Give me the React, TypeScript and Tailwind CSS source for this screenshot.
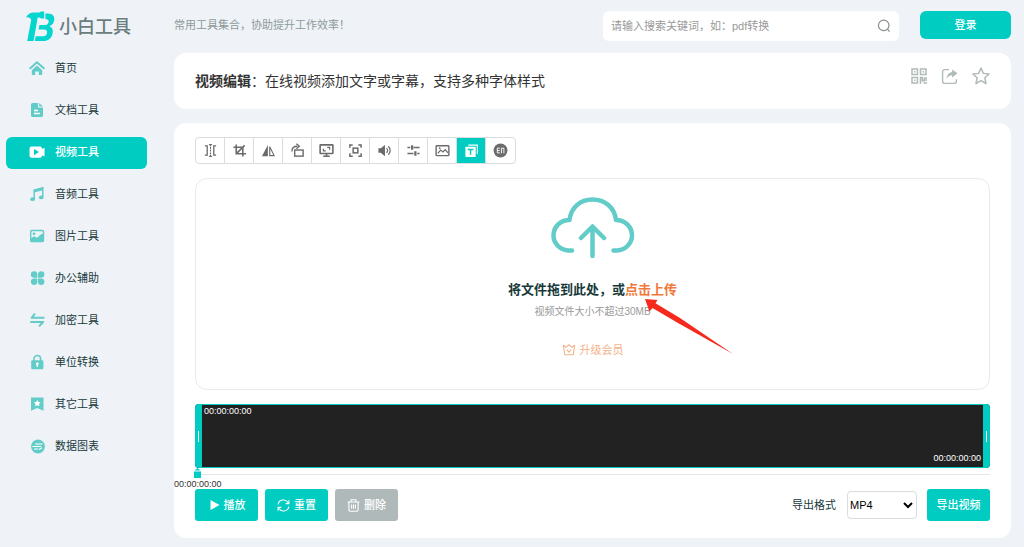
import React from 'react';

const Icon = ({ size = 16, box = 24, className = '', children }: {
  size?: number;
  box?: number;
  className?: string;
  children: React.ReactNode;
}) => (
  <svg
    width={size}
    height={size}
    viewBox={`0 0 ${box} ${box}`}
    className={`shrink-0 ${className}`}
    fill="none"
    stroke="currentColor"
    strokeWidth="2"
    aria-hidden="true"
  >
    {children}
  </svg>
);

// Sidebar icons, drawn on a 16 grid
const menu = [
  {
    label: '首页',
    icon: (
      <>
        <path d="M1.2 8.2L8 2.2l6.800 6" strokeLinecap="round" strokeLinejoin="round" />
        <path d="M8 5.600l5.200 4.600V15H9.800v-3.500H6.200V15H2.800v-4.800z" fill="currentColor" stroke="none" />
      </>
    ),
  },
  {
    label: '文档工具',
    icon: (
      <>
        <path d="M3.500 1H9v4.500h5V13.500A1.500 1.500 0 0 1 12.500 15h-9A1.500 1.500 0 0 1 2 13.500v-11A1.500 1.500 0 0 1 3.500 1z" fill="currentColor" stroke="none" />
        <path d="M10.200 1L14 4.500h-3.800z" fill="currentColor" stroke="none" />
        <path d="M5 8.500h4M5 11.500h6" stroke="#fff" strokeWidth="1.4" />
      </>
    ),
  },
  {
    label: '视频工具',
    icon: (
      <>
        <path d="M2.500 2.500h8.500a2 2 0 0 1 2 2V5l2.500-1.200v8.800L13 11.300v.4a2 2 0 0 1-2 2H2.500a2 2 0 0 1-2-2V4.500a2 2 0 0 1 2-2z" fill="currentColor" stroke="none" />
        <path d="M5 5l5 3.100-5 3.100z" fill="#00ccc2" stroke="none" />
      </>
    ),
  },
  {
    label: '音频工具',
    icon: (
      <>
        <path d="M5.200 13V4l8.600-2.200v9.400" strokeWidth="1.500" />
        <path d="M5.200 4l8.600-2.200v2.400L5.200 6.400z" fill="currentColor" stroke="none" />
        <ellipse cx="3.600" cy="13.200" rx="2.400" ry="1.900" fill="currentColor" stroke="none" />
        <ellipse cx="12.200" cy="11.400" rx="2.300" ry="1.900" fill="currentColor" stroke="none" />
      </>
    ),
  },
  {
    label: '图片工具',
    icon: (
      <>
        <rect x="1.700" y="2.500" width="12.800" height="11" rx="1" strokeWidth="1.400" />
        <circle cx="5" cy="5.800" r="1.400" fill="currentColor" stroke="none" />
        <path d="M1.500 10.500l3.500-2.300 3 1.600 5-4.300 1.500 1V13.500h-13z" fill="currentColor" stroke="none" />
      </>
    ),
  },
  {
    label: '办公辅助',
    icon: (
      <g fill="currentColor" stroke="none">
        <path d="M8.300 7.700H5a3.200 3.200 0 1 1 3.300-3.300z" />
        <path d="M9 7.700V4.400a3.200 3.200 0 1 1 3.200 3.300z" />
        <path d="M8.300 8.500v3.200A3.200 3.200 0 1 1 5 8.500z" />
        <path d="M9 8.500h3.200A3.200 3.200 0 1 1 9 11.700z" />
      </g>
    ),
  },
  {
    label: '加密工具',
    icon: <path d="M5.500 2.200L2.600 5.800h12M2 10h12.200l-3.600 3.800" strokeLinecap="round" strokeLinejoin="round" />,
  },
  {
    label: '单位转换',
    icon: (
      <>
        <path d="M5 7V4.800a3.300 3.300 0 0 1 6.600 0V7" strokeWidth="1.600" />
        <rect x="2.200" y="6.300" width="12.200" height="9" rx="1.200" fill="currentColor" stroke="none" />
        <circle cx="8.300" cy="9.800" r="1.400" fill="#fff" stroke="none" />
        <path d="M8.300 10v3" stroke="#fff" strokeWidth="1.200" />
      </>
    ),
  },
  {
    label: '其它工具',
    icon: (
      <>
        <path d="M2 1.500h12.500v13.300L8.300 12 2 14.800z" fill="currentColor" stroke="none" />
        <path d="M8.300 4l1.100 2.100 2.300.3-1.700 1.600.4 2.300-2.100-1.100-2.100 1.100.4-2.300-1.700-1.600 2.300-.3z" fill="#fff" stroke="none" />
      </>
    ),
  },
  {
    label: '数据图表',
    icon: (
      <>
        <circle cx="9" cy="8.500" r="6.900" fill="currentColor" stroke="none" />
        <path d="M6 6h7.500M3.500 8.500h8.500M5 11h4M10 11.500l3-1.800" stroke="#fff" strokeWidth="1.100" />
      </>
    ),
  },
];

// Toolbar icons, drawn on a 16 grid
const tools = [
  {
    name: '裁剪时长',
    icon: (
      <>
        <path d="M2 3h2.500v10H2M14 3h-2.500v10H14" strokeWidth="1.400" />
        <path d="M8 4v2M8 7v2M8 10v2" strokeWidth="1.200" />
        <path d="M6 1h4L8 3.800zM6 15h4L8 12.200z" fill="currentColor" stroke="none" />
      </>
    ),
  },
  { name: '裁剪画面', icon: <path d="M4.500 1.500v10H15M1.500 4.500h10V14.500M5 11l8.500-8.500" strokeWidth="1.700" /> },
  {
    name: '镜像',
    icon: (
      <>
        <path d="M7.300 2v12H1z" fill="currentColor" stroke="none" />
        <path d="M9.300 4v9.400h4.700z" strokeWidth="1.200" />
      </>
    ),
  },
  {
    name: '旋转',
    icon: (
      <>
        <rect x="5" y="7.500" width="9" height="6.500" strokeWidth="1.500" />
        <path d="M2 9c0-4 2.500-5.500 6-5.500" strokeWidth="1.500" />
        <path d="M6.800.800L10 3.500 6.800 6.200" strokeWidth="1.400" />
      </>
    ),
  },
  {
    name: '分辨率',
    icon: (
      <>
        <rect x="1.200" y="2" width="13.600" height="9.200" rx=".5" strokeWidth="1.700" />
        <path d="M8 11v3M4.500 14.200h7" strokeWidth="1.700" />
        <path d="M4.700 6v2.500h2.500M8.800 4.700h2.500v2.500" strokeWidth="1.300" />
      </>
    ),
  },
  {
    name: '尺寸',
    icon: (
      <>
        <path d="M5 2H2v3M11 2h3v3M2 11v3h3M14 11v3h-3" strokeWidth="1.600" />
        <rect x="5.500" y="5.500" width="5" height="5" strokeWidth="1.600" />
      </>
    ),
  },
  {
    name: '音量',
    icon: (
      <>
        <path d="M1.500 5.500h2.500L8.500 2v12L4 10.500H1.500z" fill="currentColor" stroke="none" />
        <path d="M10.200 5.500c1.400 1.300 1.400 3.700 0 5M12 3.500c2.700 2.400 2.700 6.600 0 9" strokeWidth="1.300" />
      </>
    ),
  },
  {
    name: '调节',
    icon: (
      <>
        <path d="M1.500 4.800h3M8 4.800h6.500M1.500 11.200h6.500M12 11.200h2.500" strokeWidth="1.400" />
        <path d="M6.500 2.300v5M10 8.700v5" strokeWidth="2.400" />
      </>
    ),
  },
  {
    name: '图片',
    icon: (
      <>
        <rect x="1.200" y="3" width="13.600" height="10.500" rx=".8" strokeWidth="1.500" />
        <path d="M3 11l3-3.500 2.500 2 2.500-2.500 2.800 3.500" strokeWidth="1.300" />
        <circle cx="5" cy="5.500" r=".9" fill="currentColor" stroke="none" />
      </>
    ),
  },
  {
    name: '文字',
    icon: (
      <>
        <path d="M4.500 1.500h10.300v10.300h-1.200V2.800H4.500z" fill="currentColor" stroke="none" />
        <rect x="1.500" y="4" width="11" height="10.800" rx=".6" fill="currentColor" stroke="none" />
        <path d="M4 7h6M7 7v5.500" stroke="#00ccc2" strokeWidth="1.500" />
      </>
    ),
    active: true,
  },
  {
    name: '片尾',
    icon: (
      <>
        <circle cx="8" cy="8" r="7.400" fill="currentColor" stroke="none" />
        <path d="M7.300 5.500H4.600v5h2.700M4.600 8h2.500M9 11V5.500h2.600V11" stroke="#fff" strokeWidth="1" />
      </>
    ),
  },
];

const Logo = () => (
  <a href="#" className="flex h-[53px] items-center pl-[26px]">
    <svg width="29" height="32" viewBox="0 0 29 32" className="shrink-0" aria-hidden="true">
      <g fill="#05d5cf">
        <path d="M0 6.500C1.500 3 4.500 1.600 8 1.600h5.500L15 .6h3.200V7.600H15l-1.500-1.100h-1.800L7.600 30H1.200L5.200 9C4.500 7 2.800 6 0 6.500z" />
        <path d="M19.400 2.500h2.300c5 0 7.200 2.800 6.500 6.700-.5 3-2.200 5-4.800 6 2.700 1 3.900 3.400 3.300 6.700-.8 5-4.300 8.100-9.500 8.100H8.800l.9-4.700h7.600c2 0 3.300-1.100 3.700-3.200.4-2.300-.6-3.500-2.600-3.500h-5.800l.8-4.600h5.900c1.800 0 3-1 3.300-2.900.3-1.900-.5-2.800-2.300-2.800h-.9z" />
      </g>
    </svg>
    <span className="ml-1 text-lg font-medium leading-none text-[#6b7d7d]">小白工具</span>
  </a>
);

const Sidebar = () => (
  <aside className="w-[174px] shrink-0">
    <Logo />
    <nav className="flex flex-col gap-2.5 pl-1.5 pr-[27px]">
      {menu.map((item) => (
        <a
          key={item.label}
          href="#"
          className={`flex h-8 items-center gap-2.5 rounded-md pb-0.5 pl-[23px] text-[11px] ${
            item.label === '视频工具' ? 'bg-[#00ccc2] font-medium text-white' : 'text-[#17393a]'
          }`}
        >
          <Icon box={16} className={item.label === '视频工具' ? 'text-white' : 'text-[#62ccc8]'}>{item.icon}</Icon>
          {item.label}
        </a>
      ))}
    </nav>
  </aside>
);

const Header = () => (
  <header className="flex h-[53px] items-start pt-[11px]">
    <p className="flex-1 pt-1.5 text-[11px] leading-4 text-[#8d9999]">常用工具集合，协助提升工作效率！</p>
    <form className="flex h-[30px] w-[296px] items-center rounded-md bg-white px-2">
      <input
        type="text"
        aria-label="搜索"
        placeholder="请输入搜索关键词，如：pdf转换"
        className="min-w-0 flex-1 text-[11px] outline-none placeholder:text-[#999]"
      />
      <button type="button" aria-label="搜索" className="text-[#858c8c]">
        <Icon size={14}>
          <circle cx="11.500" cy="11" r="9" />
          <path d="M18 17.500l3.500 4" />
        </Icon>
      </button>
    </form>
    <button type="button" className="ml-[21px] h-7 w-[91px] rounded-md bg-[#00ccc2] text-[11px] font-medium text-white">登录</button>
  </header>
);

const TitleCard = () => (
  <section className="flex h-14 items-center justify-between rounded-xl bg-white px-[21px]">
    <h1 className="text-sm text-[#333]"><b className="font-bold">视频编辑</b>：在线视频添加文字或字幕，支持多种字体样式</h1>
    <div className="flex items-center gap-3.5 pb-2.5 text-[#b0bbb9]">
      <button type="button" aria-label="二维码">
        <Icon size={16} box={16}>
          <path d="M1 1h5.500v5.500H1zM9.500 1H15v5.500H9.500zM1 9.500h5.500V15H1z" strokeWidth="1.500" />
          <path d="M3 3.800h1.500M11.500 3.800H13M3 12.300h1.500M9.500 16V9.500h1.800v3.300h2V9.500M15 9v4M12.500 15H16" strokeWidth="1.500" />
        </Icon>
      </button>
      <button type="button" aria-label="分享">
        <Icon size={17} box={16}>
          <path d="M7.500 1.500h-4a2 2 0 0 0-2 2v9a2 2 0 0 0 2 2h9a2 2 0 0 0 2-2v-2" strokeWidth="1.300" />
          <path d="M10.500 1.500L15.500 5l-5 4V6.800C8 6.800 6.500 8 5.300 10.300 5.500 6.500 7.500 4 10.500 3.700z" fill="currentColor" stroke="none" />
        </Icon>
      </button>
      <button type="button" aria-label="收藏">
        <Icon size={18}>
          <path d="M12 1.500l3.200 7 7.600.8-5.700 5.100 1.600 7.600-6.700-3.900L5.300 22l1.600-7.600L1.200 9.300l7.600-.8z" strokeLinejoin="round" />
        </Icon>
      </button>
    </div>
  </section>
);

const Toolbar = () => (
  <div className="flex h-[27px] w-fit overflow-hidden rounded border border-[#d9dddd]">
    {tools.map((tool) => (
      <button
        key={tool.name}
        type="button"
        aria-label={tool.name}
        className={`flex w-[29px] items-center justify-center border-r border-[#d9dddd] last:border-r-0 ${
          tool.active ? 'bg-[#00ccc2] text-white' : 'text-[#6b6b6b]'
        }`}
      >
        <Icon size={15} box={16}>{tool.icon}</Icon>
      </button>
    ))}
  </div>
);

const UploadArea = () => (
  <div className="relative mt-3.5 flex h-[212px] flex-col items-center rounded-xl border border-[#e8ebeb] pt-[18px]">
    <svg width="84" height="62" viewBox="0 0 84 62" fill="none" stroke="#62ccc8" strokeWidth="4.500" strokeLinecap="round" strokeLinejoin="round" aria-hidden="true">
      <path d="M21 53.500h-4C8.500 52.500 2.500 46 2.500 38.500c0-8.500 6.500-15.500 16-15.500C20 10.500 29 2.500 41.500 2.500S63.500 10.500 65 23c9.500 0 16 7 16 15.500 0 7.500-6 14-14.500 15h-4" />
      <path d="M41.500 59V30M30 41l11.500-11.500L53 41" />
    </svg>
    <p className="mt-[21px] text-[13px] font-bold leading-5 text-[#17393a]">
      将文件拖到此处，或<a href="#" className="text-[#f0783c]">点击上传</a>
    </p>
    <p className="mt-1 text-[10px] leading-4 text-[#999]">视频文件大小不超过30MB</p>
    <a href="#" className="mt-5 flex items-center gap-1 text-[11px] leading-5 text-[#f5b28c]">
      <Icon size={14} box={16}>
        <path d="M1.500 2.500L4.500 5 8 2l3.500 3 3-2.500-1.700 11H3.200z" strokeWidth="1.200" strokeLinejoin="round" />
        <path d="M5.500 7.500L8 10.500l2.500-3" strokeWidth="1.200" />
      </Icon>
      升级会员
    </a>
    {/* Pointer to the upload link */}
    <svg width="89" height="57" viewBox="0 0 89 57" className="absolute left-1/2 top-[120px] ml-[52px]" aria-hidden="true">
      <path d="M0 0l12.500 1-2 3.200L35 19l53 36-55-31L7.500 9 4.500 12.500z" fill="#f5291c" />
    </svg>
  </div>
);

const Timeline = () => (
  <div className="mt-3.5">
    <div className="flex h-16 overflow-hidden rounded bg-[#222]">
      <div className="flex w-[7px] items-center justify-center bg-[#00ccc2]"><i className="h-[11px] w-px bg-white" /></div>
      <div className="flex flex-1 flex-col justify-between border-y border-[#00ccc2] px-0.5 pb-[3px] text-[9px] leading-3 text-white">
        <span>00:00:00:00</span>
        <span className="self-end">00:00:00:00</span>
      </div>
      <div className="flex w-[7px] items-center justify-center bg-[#00ccc2]"><i className="h-[11px] w-px bg-white" /></div>
    </div>
    <div className="relative h-[21px] pt-1.5">
      <hr className="border-[#e4e7e7]" />
      <svg width="7" height="10" viewBox="0 0 7 10" className="absolute left-[-1px] top-0" fill="#00ccc2" aria-hidden="true">
        <path d="M3.500 0L6.500 2.500H.5zM0 3.500h7V10H0z" />
      </svg>
      <span className="absolute left-[-21px] top-[10px] text-[9px] leading-3 text-[#333]">00:00:00:00</span>
    </div>
  </div>
);

const buttonClass = 'flex h-8 w-[63px] items-center justify-center gap-1 rounded-[3px] text-[11px] font-medium text-white';

const Controls = () => (
  <div className="flex items-center justify-between">
    <div className="flex gap-[7px]">
      <button type="button" className={`${buttonClass} bg-[#00ccc2]`}>
        <Icon size={12} box={12}><path d="M2.500 1l9 5-9 5z" fill="currentColor" stroke="none" /></Icon>
        播放
      </button>
      <button type="button" className={`${buttonClass} bg-[#00ccc2]`}>
        <Icon size={13}>
          <path d="M2 10a10 10 0 0 1 18-4l1.500 2.500M22 14a10 10 0 0 1-18 4l-1.500-2.500M22 2.500v6h-6M2 21.500v-6h6" />
        </Icon>
        重置
      </button>
      <button type="button" className={`${buttonClass} bg-[#b0b9b9]`}>
        <Icon size={13}>
          <path d="M1 5.500h22M7.500 5V1.500h9V5M3.500 6v14a2.500 2.500 0 0 0 2.500 2.500h12a2.500 2.500 0 0 0 2.500-2.500V6M8.500 10v8M12 10v8M15.500 10v8" />
        </Icon>
        删除
      </button>
    </div>
    <div className="flex items-center">
      <label htmlFor="format" className="mr-[11px] text-[11px] text-[#17393a]">导出格式</label>
      <div className="relative mr-2.5">
        <select id="format" className="h-7 w-[70px] appearance-none rounded border border-[#d9dddd] bg-white pl-0.5 text-[11px] text-black">
          <option>MP4</option>
        </select>
        <Icon size={10} box={10} className="pointer-events-none absolute right-1 top-[9px] text-black">
          <path d="M1 3l4 4 4-4" />
        </Icon>
      </div>
      <button type="button" className={`${buttonClass} bg-[#00ccc2]`}>导出视频</button>
    </div>
  </div>
);

export default function App() {
  return (
    <div className="flex min-h-screen bg-[#eff3f8] font-['Liberation_Sans','Noto_Sans_CJK_SC',sans-serif]">
      <Sidebar />
      <main className="min-w-0 flex-1 pb-[9px] pr-[13px]">
        <Header />
        <TitleCard />
        <section className="mt-3.5 rounded-xl bg-white px-[21px] pb-[17px] pt-3.5">
          <Toolbar />
          <UploadArea />
          <Timeline />
          <Controls />
        </section>
      </main>
    </div>
  );
}
